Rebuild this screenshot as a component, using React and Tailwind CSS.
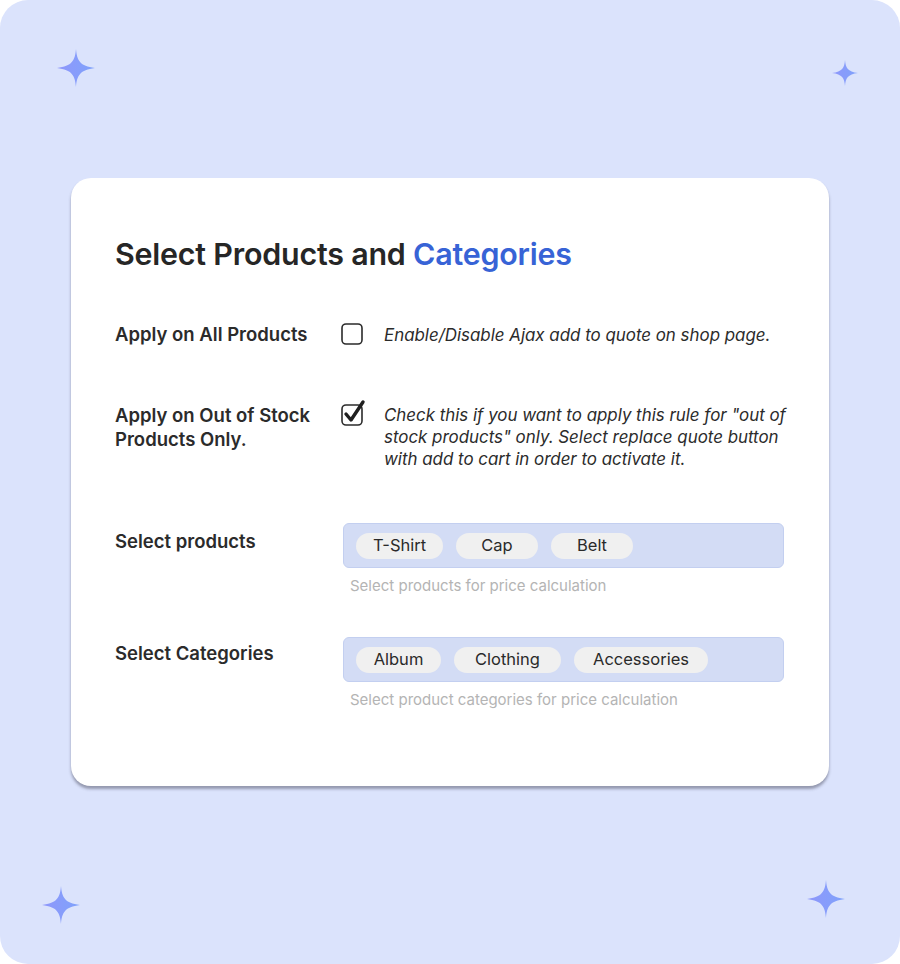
import React from "react";

function Sparkle({ size, className }) {
  return (
    <svg width={size} height={size} viewBox="0 0 40 40" className={className}>
      <defs>
        <linearGradient id="spk" x1="0" y1="0" x2="1" y2="0">
          <stop offset="0" stopColor="#8f97fb" />
          <stop offset="1" stopColor="#7fa2fb" />
        </linearGradient>
      </defs>
      <path
        d="M20 0 C21 12 24 18 40 20 C24 22 21 28 20 40 C19 28 16 22 0 20 C16 18 19 12 20 0 Z"
        fill="url(#spk)"
      />
    </svg>
  );
}

function Checkbox({ checked }) {
  if (!checked) {
    return (
      <svg width="22" height="22" viewBox="0 0 22 22" className="shrink-0">
        <rect x="1" y="1" width="20" height="20" rx="4" fill="none" stroke="#2b2b2b" strokeWidth="1.6" />
      </svg>
    );
  }
  return (
    <svg width="26" height="26" viewBox="0 0 26 26" className="shrink-0 -mt-[4px] overflow-visible">
      <rect x="1" y="5" width="20" height="20" rx="4" fill="none" stroke="#2b2b2b" strokeWidth="1.6" />
      <path d="M5 14 L10 20 L22 2" fill="none" stroke="#1f1f1f" strokeWidth="3.4" strokeLinecap="round" strokeLinejoin="round" />
    </svg>
  );
}

function Chip({ label, width }) {
  return (
    <span
      className={`flex h-[26px] items-center justify-center rounded-full bg-[#f0f0f0] text-[16.5px] text-[#2a2a2a] ${width}`}
    >
      {label}
    </span>
  );
}

function TagField({ chips, help }) {
  return (
    <div>
      <div className="flex h-[45px] items-center gap-[13px] rounded-[6px] border border-[#c3cff0] bg-[#d3dcf5] px-[12px]">
        {chips.map((c) => (
          <Chip key={c.label} label={c.label} width={c.w} />
        ))}
      </div>
      <p className="mt-[7px] pl-[7px] text-[15px] leading-[21px] text-[#b4b4b4]">{help}</p>
    </div>
  );
}

export default function App() {
  const products = [
    { label: "T-Shirt", w: "w-[87px]" },
    { label: "Cap", w: "w-[82px]" },
    { label: "Belt", w: "w-[82px]" },
  ];
  const categories = [
    { label: "Album", w: "w-[85px]" },
    { label: "Clothing", w: "w-[107px]" },
    { label: "Accessories", w: "w-[134px]" },
  ];

  return (
    <div className="bg-white" style={{ fontFamily: "Inter, 'Noto Sans', sans-serif" }}>
      <div className="relative h-[964px] w-[900px] rounded-[28px] bg-[#dbe3fc] pt-[178px] pl-[71px]">
        <Sparkle size={38} className="absolute left-[57px] top-[49px]" />
        <Sparkle size={26} className="absolute left-[832px] top-[60px]" />
        <Sparkle size={38} className="absolute left-[42px] top-[886px]" />
        <Sparkle size={38} className="absolute left-[807px] top-[880px]" />

        <div className="w-[758px] h-[608px] rounded-[20px] bg-white pl-[44px] pr-[20px] pt-[58px] shadow-[0_3px_3px_rgba(60,60,80,0.45)]">
          <h1 className="text-[30.4px] font-semibold leading-[36px] tracking-[-0.2px] text-[#262626]">
            Select Products and <span className="text-[#3763d6]">Categories</span>
          </h1>

          <div className="mt-[50px] grid grid-cols-[226px_443px] text-[#2b2b2b]">
            <div className="text-[18.5px] font-semibold leading-[24px]">Apply on All Products</div>
            <div className="flex items-start gap-[21px] pt-[1px]">
              <Checkbox checked={false} />
              <p className="whitespace-nowrap text-[16.9px] italic leading-[22px] pt-[1px]">
                Enable/Disable Ajax add to quote on shop page.
              </p>
            </div>

            <div className="mt-[57px] text-[18.5px] font-semibold leading-[24px]">
              Apply on Out of Stock
              <br />
              Products Only.
            </div>
            <div className="mt-[56px] flex items-start gap-[17px] pt-[2px]">
              <Checkbox checked />
              <p className="whitespace-nowrap text-[16.9px] italic leading-[22px]">
                Check this if you want to apply this rule for "out of
                <br />
                stock products" only. Select replace quote button
                <br />
                with add to cart in order to activate it.
              </p>
            </div>

            <div className="mt-[59px] text-[18.5px] font-semibold leading-[24px]">Select products</div>
            <div className="mt-[53px] pl-[2px]">
              <TagField chips={products} help="Select products for price calculation" />
            </div>

            <div className="mt-[45px] text-[18.5px] font-semibold leading-[24px]">Select Categories</div>
            <div className="mt-[41px] pl-[2px]">
              <TagField chips={categories} help="Select product categories for price calculation" />
            </div>
          </div>
        </div>
      </div>
    </div>
  );
}
